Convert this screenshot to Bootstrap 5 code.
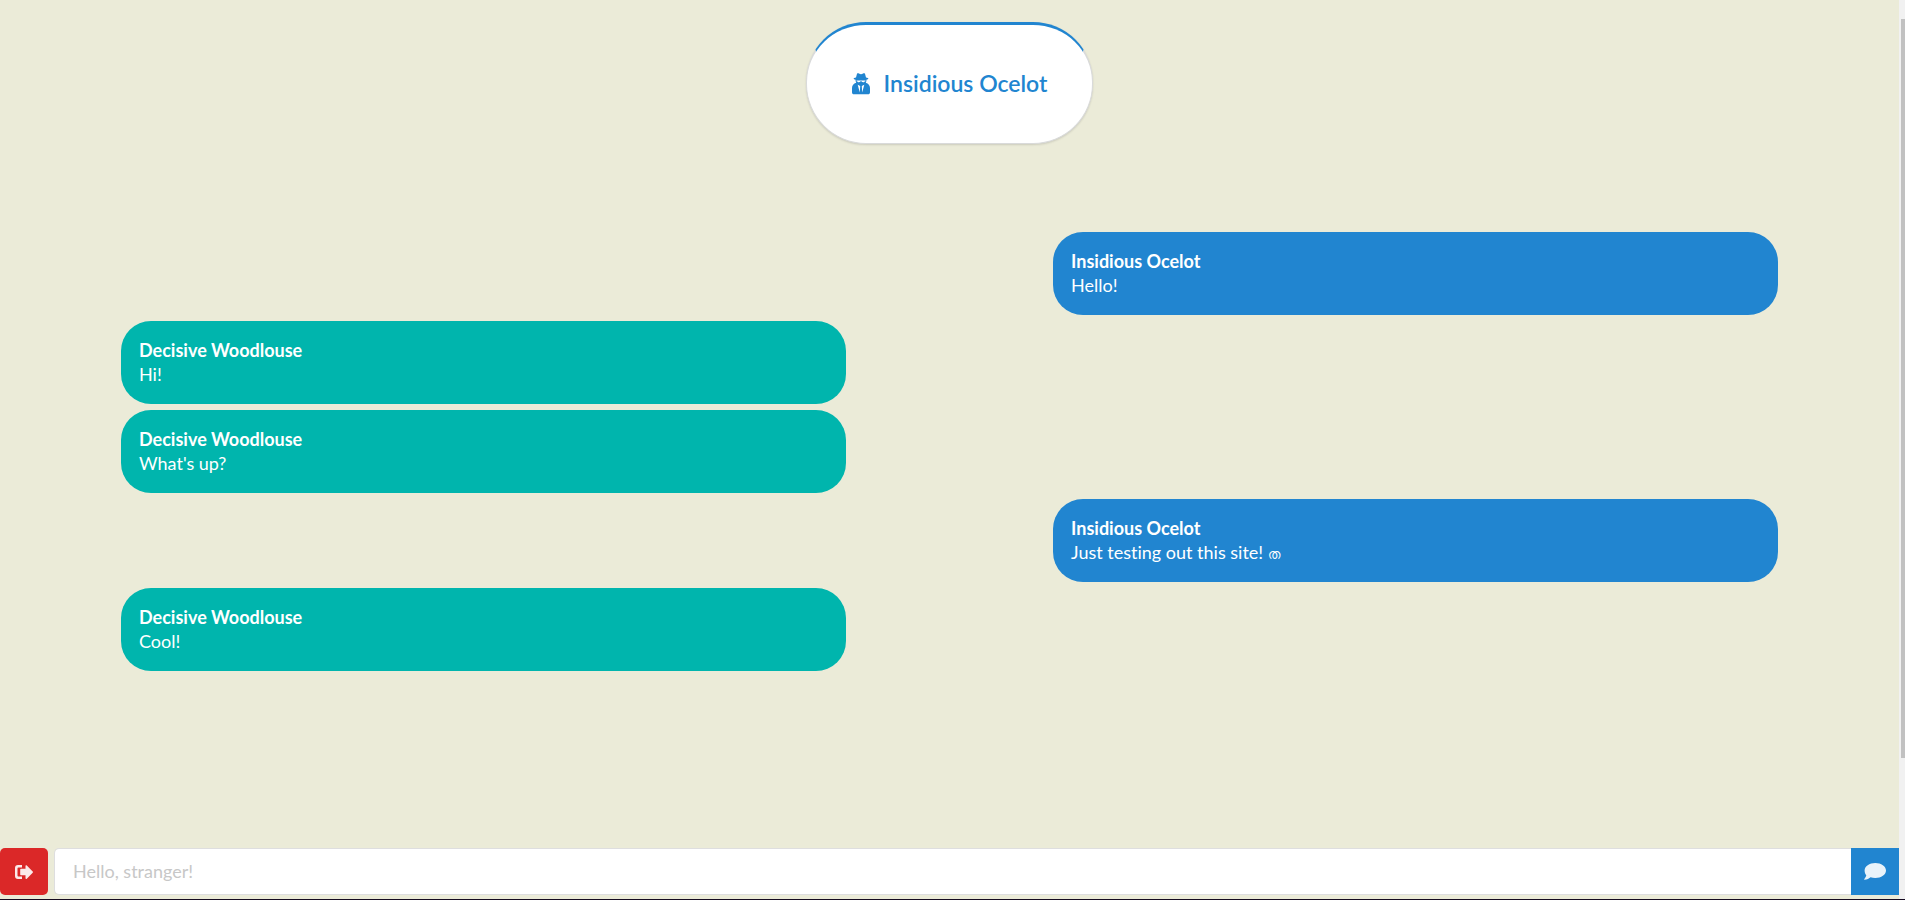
<!DOCTYPE html>
<html lang="en">
<head>
<meta charset="utf-8">
<meta name="viewport" content="width=device-width, initial-scale=1">
<title>Stranger chat</title>
<link href="https://cdn.jsdelivr.net/npm/bootstrap@5.3.0/dist/css/bootstrap.min.css" rel="stylesheet">
<style>
:root { --chat-blue: #2185d0; --chat-teal: #00b5ad; --chat-red: #db2828; --chat-bg: #ebebd8; }
body { font-family: Lato, "Noto Sans", "DejaVu Sans", sans-serif; font-size: 18px; line-height: 24px; background: var(--chat-bg); font-variant-ligatures: none; }
.page-shell { border-bottom: 1px solid #160a20; }
.scroll-track { width: 6px; background: #f1f1f1; padding: 19px 0 0 2px; }
.scroll-thumb { height: 84%; background: #c1c1c1; }
.peer-pill { margin-top: 22px; padding: 44px 45px 45px; border: 1px solid #d9dada; border-top: 3px solid var(--chat-blue); border-radius: 60px; color: var(--chat-blue); font-size: 23px; font-weight: 600; line-height: 29px; box-shadow: 0 1px 2px rgba(34,36,38,.15); gap: 14px; }
.chat-log { padding: 88px 121px 0; gap: 6px; }
.bubble { width: 43.75%; padding: 17px 18px 18px; border-radius: 30px; color: #fff; }
.bubble-me { background: var(--chat-blue); align-self: flex-end; }
.bubble-them { background: var(--chat-teal); }
.glyph-end { font-size: 13px; line-height: 1; }
.compose { gap: 6px; padding-bottom: 4px; }
.sq-btn { width: 48px; height: 47px; border-radius: 5px; padding: 0; border: 0; color: #fff; }
.sq-btn svg { opacity: .9; }
.btn-leave, .btn-leave:hover { background: var(--chat-red); }
.btn-send, .btn-send:hover { background: var(--chat-blue); border-radius: 0; }
.msg-input { height: 47px; font-size: 18px; padding: 0 18px 2px; border: 1px solid #dededf; border-right: 0; border-radius: 5px 0 0 5px; }
.msg-input::placeholder { color: #c7c7c7; }
</style>
</head>
<body>
<div class="page-shell d-flex vh-100 overflow-hidden">
  <div class="d-flex flex-column flex-grow-1">
    <header class="d-flex justify-content-center">
      <h1 class="peer-pill bg-white mb-0 d-flex align-items-center">
        <svg width="18" height="22" viewBox="0 0 18 22" fill="currentColor" aria-hidden="true"><path d="M5 .8c.5-.7 1.300-.6 2-.2 1.200.7 2.800.7 4 0 .7-.4 1.500-.5 2 .2l1 3.600c1.500.3 2.400.7 2.400 1.100 0 .5-.8.900-2 1.200v1.300l-.6 1.700c2.600.8 4.200 2.700 4.200 5.400v4.100c0 1.300-.8 2.100-2 2.100H2c-1.200 0-2-.8-2-2.100v-4.100c0-2.700 1.600-4.600 4.200-5.400L3.600 8V6.700c-1.200-.3-2-.7-2-1.200 0-.4.900-.8 2.400-1.100z"/><path fill="#fff" d="M4.500 7.500h9v.7h-.7c-.4 1.300-2.700 1.300-3.300 0h-1c-.6 1.300-2.900 1.300-3.300 0h-.7zM5.700 11.700l2.500 1.300-.4 6.500zM12.300 11.700 9.800 13l.4 6.500z"/></svg>
        <span>Insidious Ocelot</span>
      </h1>
    </header>
    <main class="chat-log d-flex flex-column flex-grow-1">
      <div class="bubble bubble-me"><strong>Insidious Ocelot</strong><div>Hello!</div></div>
      <div class="bubble bubble-them"><strong>Decisive Woodlouse</strong><div>Hi!</div></div>
      <div class="bubble bubble-them"><strong>Decisive Woodlouse</strong><div>What's up?</div></div>
      <div class="bubble bubble-me"><strong>Insidious Ocelot</strong><div>Just testing out this site! <span class="glyph-end">ത</span></div></div>
      <div class="bubble bubble-them"><strong>Decisive Woodlouse</strong><div>Cool!</div></div>
    </main>
    <form class="compose d-flex">
      <button type="button" class="btn sq-btn btn-leave d-flex align-items-center justify-content-center" aria-label="Leave chat">
        <svg width="18" height="14" viewBox="0 0 18 14" fill="currentColor" aria-hidden="true"><path d="M7 0H3a3 3 0 0 0-3 3v8a3 3 0 0 0 3 3h4v-2.500H3.500a1 1 0 0 1-1-1v-7a1 1 0 0 1 1-1H7z"/><path d="M10.500.8v3H6c-.5 0-.8.300-.8.800v4.800c0 .5.300.8.800.8h4.500v3c0 .7.700 1 1.300.5l5.900-6c.400-.4.400-.8 0-1.200l-5.900-6c-.6-.5-1.300-.4-1.300.3z"/></svg>
      </button>
      <div class="d-flex flex-grow-1">
        <input type="text" class="form-control msg-input" placeholder="Hello, stranger!" aria-label="Message">
        <button type="submit" class="btn sq-btn btn-send flex-shrink-0 d-flex align-items-center justify-content-center" aria-label="Send message">
          <svg width="22" height="17" viewBox="0 0 22 17" fill="currentColor" aria-hidden="true"><path d="M11.300 0C17.200 0 22 3.300 22 7.500S17.200 15 11.300 15c-1.700 0-3.300-.3-4.700-.8C5.300 15.300 3 16.700.5 16.700c-.4 0-.5-.4-.3-.7.600-.6 1.700-2.100 2.100-3.800C1.100 11 .6 9.300.6 7.500.6 3.300 5.400 0 11.300 0z"/></svg>
        </button>
      </div>
    </form>
  </div>
  <div class="scroll-track flex-shrink-0"><div class="scroll-thumb"></div></div>
</div>
<script src="https://cdn.jsdelivr.net/npm/bootstrap@5.3.0/dist/js/bootstrap.bundle.min.js"></script>
</body>
</html>
